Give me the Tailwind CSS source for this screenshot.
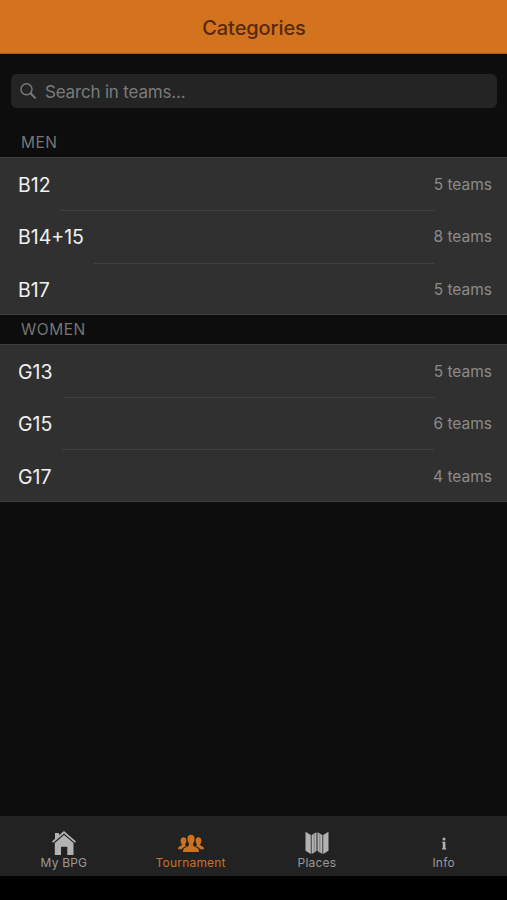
<!DOCTYPE html>
<html lang="en">
<head>
<meta charset="utf-8">
<title>Categories</title>
<script src="https://cdn.jsdelivr.net/npm/@tailwindcss/browser@4"></script>
</head>
<body class="bg-black">
<div class="w-[507px] h-[876px] flex flex-col overflow-hidden bg-[#0d0d0d] font-['Inter','Liberation_Sans',sans-serif]">
  <header class="h-[54px] shrink-0 bg-[#d4731e] border-b border-[#a0591a] flex items-center justify-center pt-[3px] pl-px">
    <h1 class="text-[20px] leading-6 font-medium tracking-[-0.1px] text-[#57290a]">Categories</h1>
  </header>

  <div class="mt-5 ml-[11px] mr-[10px] h-[34px] shrink-0 rounded-[6px] bg-[#242424] flex items-center pl-[9px] gap-[8px] text-[#7b7b7b]">
    <svg class="w-[17px] h-[17px]" viewBox="0 0 17 17" fill="none" stroke="currentColor"><circle cx="6.5" cy="6.3" r="5.5" stroke-width="1.4"/><path d="M10.5 10.3L15.6 15.4" stroke-width="2"/></svg>
    <span class="text-[17px] leading-5 tracking-[-0.18px] pt-[2px]">Search in teams...</span>
  </div>

  <h2 class="h-[49px] shrink-0 pl-[21px] pt-[25px] text-[15.5px] leading-5 tracking-[0.5px] text-[#757575]">MEN</h2>
  <ul class="h-[158px] shrink-0 grid grid-rows-3 bg-[#303030] border-y border-[#3d3d3d] text-[#f0f0f0]">
    <li class="flex items-center justify-between pl-[18px] pr-[15px] pt-[2px] relative"><span class="text-[19.5px] pt-[1px]">B12</span><span class="text-[15.5px] text-[#8b8b8b]">5 teams</span><i class="absolute left-[60px] right-[72px] bottom-[-1px] h-px bg-[#414141]"></i></li>
    <li class="flex items-center justify-between pl-[18px] pr-[15px] pt-[2px] relative"><span class="text-[19.5px] pt-[2px]">B14+15</span><span class="text-[15.5px] text-[#8b8b8b]">8 teams</span><i class="absolute left-[94px] right-[73px] bottom-[-2px] h-px bg-[#414141]"></i></li>
    <li class="flex items-center justify-between pl-[18px] pr-[15px] pt-[3px]"><span class="text-[19.5px] pt-[2px]">B17</span><span class="text-[15.5px] text-[#8b8b8b]">5 teams</span></li>
  </ul>

  <h2 class="h-[29px] shrink-0 pl-[21px] pt-[5px] text-[15.5px] leading-5 tracking-[0.5px] text-[#757575]">WOMEN</h2>
  <ul class="h-[158px] shrink-0 grid grid-rows-3 bg-[#303030] border-y border-[#3d3d3d] text-[#f0f0f0]">
    <li class="flex items-center justify-between pl-[18px] pr-[15px] pt-[2px] relative"><span class="text-[19.5px] pt-[1px]">G13</span><span class="text-[15.5px] text-[#8b8b8b]">5 teams</span><i class="absolute left-[63px] right-[72px] bottom-[-1px] h-px bg-[#414141]"></i></li>
    <li class="flex items-center justify-between pl-[18px] pr-[15px] pt-[2px] relative"><span class="text-[19.5px] pt-[2px]">G15</span><span class="text-[15.5px] text-[#8b8b8b]">6 teams</span><i class="absolute left-[62px] right-[73px] bottom-[-1px] h-px bg-[#414141]"></i></li>
    <li class="flex items-center justify-between pl-[18px] pr-[15px] pt-[3px]"><span class="text-[19.5px] pt-[2px]">G17</span><span class="text-[15.5px] text-[#8b8b8b]">4 teams</span></li>
  </ul>

  <nav class="mt-auto h-[60px] shrink-0 grid grid-cols-4 bg-[#222222] text-[#999999] text-[12px] leading-[16px] tracking-[0.2px]">
    <a class="flex flex-col items-center pt-[15px] pl-px">
      <svg class="w-[24px] h-[24px]" viewBox="0 0 24 24" fill="#b2b2b2"><path d="M12 0L24 10.4L22.8 11.8L12 2.6L1.2 11.8L0 10.4L3 7.8V2H7V4.3Z"/><path d="M12 4L21.5 12V24H15.3V15.7H9V24H2.8V12Z"/></svg>
      <span>My BPG</span>
    </a>
    <a class="flex flex-col items-center pt-[15px] pl-px text-[#cd701f]">
      <svg class="w-[26px] h-[24px]" viewBox="0 0 26 24" fill="currentColor"><path d="M13 3.7C15.2 3.7 16.6 5.2 16.6 7.8C16.6 10 15.8 11.6 15 12.5C14.7 14.8 16 15.5 18.5 16.4C20.3 17.1 21 18.3 21 20.9H5C5 18.3 5.7 17.1 7.5 16.4C10 15.5 11.3 14.8 11 12.5C10.2 11.6 9.4 10 9.4 7.8C9.4 5.2 10.8 3.7 13 3.7Z"/><path id="side" d="M5.5 6.3C7.1 6.3 8.2 7.4 8.3 9.2C8.4 10.9 8 12.4 7.2 13.2C7 14.4 7.6 14.9 8.5 15.2C5.8 16 4.5 16.5 3.9 18.3H0C0 16.3 .6 15.5 2.4 14.9C3.6 14.5 4 14 3.8 13.2C2.9 12.3 2.5 10.8 2.6 9.2C2.7 7.4 3.9 6.3 5.5 6.3Z"/><use href="#side" transform="matrix(-1 0 0 1 26 0)"/></svg>
      <span>Tournament</span>
    </a>
    <a class="flex flex-col items-center pt-[15px]">
      <svg class="w-[24px] h-[24px]" viewBox="0 0 24 24"><g fill="#b2b2b2"><path d="M.5 .8L5.8 4V23L.5 19.7Z"/><path d="M11.5 1.3V20L6.6 23V4Z"/><path d="M12.5 1.3L17.4 4V23L12.5 20Z"/><path d="M23.5 .8V19.7L18.2 23V4Z"/></g><path d="M9.2 2.8V21.4M14.8 2.8V21.4" stroke="#858585" stroke-width="1.2"/></svg>
      <span>Places</span>
    </a>
    <a class="flex flex-col items-center pt-[15px]">
      <svg class="w-[24px] h-[24px]" viewBox="0 0 24 24" fill="#b2b2b2"><circle cx="12" cy="8.1" r="1.5"/><path d="M10.3 10.8H13.4V17.2H14.1V18.5H10.1V17.2H10.8V12H10.3Z"/></svg>
      <span>Info</span>
    </a>
  </nav>
</div>
</body>
</html>
